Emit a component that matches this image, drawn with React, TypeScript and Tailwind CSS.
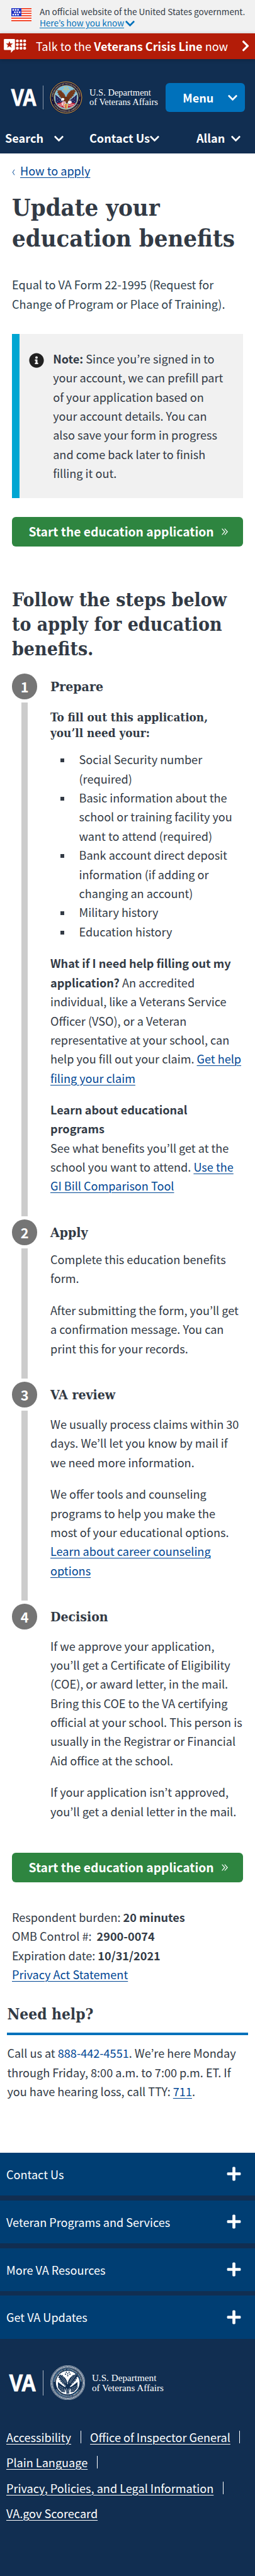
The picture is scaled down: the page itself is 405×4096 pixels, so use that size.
import type { ReactNode } from "react";
import { FaChevronDown, FaChevronRight, FaInfoCircle, FaPlus } from "react-icons/fa";

const HEADING = "font-['DejaVu_Serif_Condensed','DejaVu_Serif',serif] font-bold";
const LINK = "text-[#004795] underline decoration-1 underline-offset-[3px]";

function FlagIcon() {
  return (
    <svg viewBox="0 0 32 21" className="h-[21px] w-8 shrink-0">
      <rect width="32" height="21" fill="#fff" />
      {[0, 3.75, 7.5, 11.25, 15, 19].map((y) => (
        <rect key={y} y={y} width="32" height="1.7" fill="#f22d0c" />
      ))}
      <rect width="16" height="13" fill="#2233c4" />
      {[
        [1.8, 1.5], [5.6, 1.5], [9.4, 1.5],
        [4.4, 5.3], [8.2, 5.3], [12, 5.3],
        [1.8, 9.1], [5.6, 9.1], [9.4, 9.1],
      ].map(([x, y]) => (
        <rect key={`${x}-${y}`} x={x} y={y} width="2.4" height="2.4" fill="#fff" />
      ))}
    </svg>
  );
}

function CrisisIcon() {
  return (
    <svg viewBox="0 0 56 35" className="h-[22px] w-[35.5px] shrink-0" fill="#fff">
      <path d="M2 0H26a2 2 0 0 1 2 2V26a2 2 0 0 1-2 2H24.5L18 35V28H2a2 2 0 0 1-2-2V2A2 2 0 0 1 2 0Z" />
      <path fill="#b31c08" d="M14 5l2.2 6.3 6.8.2-5.4 4.1 2 6.6L14 18.3l-5.6 3.9 2-6.6L5 11.5l6.8-.2Z" />
      {[34, 43.3, 52.5].map((x) =>
        [4.7, 14, 23.3].map((y) => <circle key={`${x}-${y}`} cx={x} cy={y} r="3.7" />)
      )}
    </svg>
  );
}

function RingText({ id, fill, radius, size }: { id: string; fill: string; radius: number; size: number }) {
  const r = radius;
  const low = radius + size * 0.75;
  return (
    <>
      <path id={`${id}-t`} d={`M${50 - r} 50A${r} ${r} 0 0 1 ${50 + r} 50`} fill="none" />
      <path id={`${id}-b`} d={`M${50 - low} 50A${low} ${low} 0 0 0 ${50 + low} 50`} fill="none" />
      <g fill={fill} fontFamily="Liberation Serif" fontWeight="700" fontSize={size} textAnchor="middle">
        <text><textPath href={`#${id}-t`} startOffset="50%">DEPARTMENT OF VETERANS AFFAIRS</textPath></text>
        <text><textPath href={`#${id}-b`} startOffset="50%">UNITED STATES OF AMERICA</textPath></text>
      </g>
    </>
  );
}

const STARS = [[46, 20], [54, 20], [43.5, 25.5], [50, 24.5], [56.5, 25.5], [50, 30]];
const LEFT_WING = "M22 26L27 30 28 26 32 30 34 27 38 33 42 36 46 42 49 50 47 60 42 56 38 57 38 53 33 52 34 49 29 47 30 44 25 41 27 38 22 35 25 33Z";
const RIGHT_WING = "M80 23L74 28 73 24 68 29 66 27 61 32 57 36 53 42 50 50 52 60 58 56 62 56 63 52 68 51 67 48 73 45 72 42 77 38 75 36 80 32 77 30Z";

function ColorSeal() {
  return (
    <svg viewBox="0 0 100 100" className="size-[52px] shrink-0">
      <circle cx="50" cy="50" r="50" fill="#17153f" />
      <circle cx="50" cy="50" r="48" fill="none" stroke="#e3b53a" strokeWidth="1.8" />
      <circle cx="50" cy="50" r="36.8" fill="#7fbfdc" stroke="#d9ae45" strokeWidth="1.4" />
      <RingText id="seal-color" fill="#d8c27a" radius={39.8} size={6.4} />
      <circle cx="8.5" cy="58" r="1.1" fill="#d8c27a" />
      <circle cx="91.5" cy="58" r="1.1" fill="#d8c27a" />
      {STARS.map(([x, y]) => <circle key={`${x}-${y}`} cx={x} cy={y} r="1.8" fill="#f2cf4a" />)}
      <path d="M17 41L42 60 40 76 24 72 18 62Z" fill="#23255e" />
      <path d="M83 41L58 60 60 76 76 72 82 62Z" fill="#23255e" />
      <path d="M17 39L40 60M83 39L60 60" stroke="#e9e4d8" strokeWidth="1.3" />
      <path d="M21 68L42 64 45 82 30 78Z" fill="#c5283a" />
      <path d="M79 68L58 64 55 82 70 78Z" fill="#c5283a" />
      <path d="M25 73L43 68M29 77L44 73M75 73L57 68M71 77L56 73" stroke="#fff" strokeWidth="1.5" />
      <g fill="#fff">
        {[[24, 54], [29, 58], [24, 62], [34, 62], [76, 54], [71, 58], [76, 62], [66, 60], [76, 48]].map(([x, y]) => (
          <circle key={`${x}-${y}`} cx={x} cy={y} r=".9" />
        ))}
      </g>
      <path d={LEFT_WING} fill="#7a3d1e" />
      <path d={RIGHT_WING} fill="#7a3d1e" />
      <path d="M32 32L45 52M26 35L42 53M68 31L56 50M75 34L58 52" stroke="#4f2512" strokeWidth="1" />
      <path d="M44 48L57 48 60 58 54 68 46 66 40 58Z" fill="#6b3218" />
      <path d="M36 53c3-3 8-2 9 2l-3 5-5-1-3 2Z" fill="#fff" />
      <path d="M57 60l8 0 3 6-8 4-5-4Z" fill="#eef2f5" />
      <path d="M38 62L48 62 50 80 44 80 36 70Z" fill="#fff" />
      <path d="M40 62l2 15M44 62l3 17" stroke="#c5283a" strokeWidth="1.8" />
      <path d="M44 69L56 69 54 84 46 84Z" fill="#e5c25a" />
      <path d="M50 68V84M46 72l2 11" stroke="#c5283a" strokeWidth="1.4" />
    </svg>
  );
}

function WhiteSeal() {
  return (
    <svg viewBox="0 0 100 100" className="size-[55.2px] shrink-0">
      <circle cx="50" cy="50" r="49.4" fill="none" stroke="#fff" strokeWidth="1" />
      <circle cx="50" cy="50" r="46" fill="none" stroke="#fff" strokeWidth="3.4" strokeDasharray="1.9 1.3" />
      <circle cx="50" cy="50" r="43" fill="none" stroke="#fff" strokeWidth=".8" />
      <circle cx="50" cy="50" r="34" fill="#fff" />
      <RingText id="seal-white" fill="#dfe5ec" radius={36.4} size={5.8} />
      <g fill="#112e51">
        {STARS.map(([x, y]) => <circle key={`${x}-${y}`} cx={x} cy={y} r="1.9" />)}
        <path d={LEFT_WING} />
        <path d={RIGHT_WING} />
        <path d="M40 54L60 54 61 64 55 72 54 82 46 82 44 72 38 62Z" />
        <path d="M22 48L40 62 42 78 32 76 22 65Z" />
        <path d="M78 48L60 62 58 78 68 76 78 65Z" />
      </g>
      <g stroke="#fff" strokeWidth="1.1" fill="none">
        <path d="M28 31L44 52M25 36L40 53M34 31L46 50M72 29L56 52M77 34L60 54M66 30L54 50" strokeWidth=".8" />
        <path d="M24 59L38 66M24 64L39 71M30 71L41 75M76 59L62 66M76 64L61 71M70 71L59 75" strokeDasharray="2 1" />
        <path d="M36 57q5-4 9 2M46 66q2 8 0 15M51 68v14M55 66q-1 8 0 10" />
      </g>
      <path d="M18 41L43 62M82 41L57 62" stroke="#fff" strokeWidth="3" />
    </svg>
  );
}

function VaMark({ className, width }: { className: string; width: number }) {
  return (
    <svg viewBox={`0 0 ${width} 28`} className={className} overflow="visible">
      <text x="0.4" y="27" fill="#fff" stroke="#fff" strokeWidth="0.9" fontFamily="Liberation Sans" fontWeight="700" fontSize="37.6" textLength={width - 1} lengthAdjust="spacingAndGlyphs">VA</text>
    </svg>
  );
}

function StartButton({ className }: { className: string }) {
  return (
    <button className={`flex h-[46.6px] w-[367px] items-center rounded-[6px] bg-[#2e8540] pl-[26.5px] text-[19.25px] leading-none font-bold whitespace-nowrap text-white ${className}`}>
      Start the education application
      <svg viewBox="0 0 10 11" className="ml-[12px] h-[11px] w-[10px]" fill="none" stroke="#fff" strokeWidth="1.2">
        <path d="M.6 .6L5 5.5.6 10.4M4.8.6L9.2 5.5 4.8 10.4" />
      </svg>
    </button>
  );
}

function Step({ n, title, height, last, children }: { n: number; title: string; height: string; last?: boolean; children: ReactNode }) {
  return (
    <li className={`flex ${height}`}>
      <div className="flex w-[61px] shrink-0 flex-col items-start">
        <div className="flex size-[40.4px] shrink-0 items-center justify-center rounded-full bg-[#757575] text-[21.7px] leading-none font-bold text-white">{n}</div>
        {!last && <div className="my-[5px] ml-[15.2px] w-[10px] grow bg-[#ccc]" />}
      </div>
      <div className="whitespace-nowrap">
        <h3 className={`mt-[7.4px] text-[21.1px] leading-[26px] ${HEADING}`}>{title}</h3>
        {children}
      </div>
    </li>
  );
}

function Bullet({ children }: { children: ReactNode }) {
  return (
    <li className="flex">
      <span className="mt-[14px] mr-[24px] size-[6px] shrink-0 bg-[#323a45]" />
      <span>{children}</span>
    </li>
  );
}

function Divider({ className }: { className: string }) {
  return <i className={`h-[20px] w-px bg-white ${className}`} />;
}

export default function App() {
  return (
    <div className="h-[4096px] w-[405px] overflow-hidden bg-white font-['Noto_Sans_CJK_KR',sans-serif] text-[18.1px] leading-[30.36px] text-[#323a45]">
      <div className="flex h-[53.2px] bg-[#f1f1f1] pt-[12.6px] pl-[18.4px] text-[13.6px] leading-[15px] whitespace-nowrap">
        <FlagIcon />
        <div className="-mt-[1.2px] ml-[12.5px]">
          <div>An official website of the United States government.</div>
          <div className="flex items-center text-[#0071bb]">
            <span className="underline decoration-[1.3px] underline-offset-[2px]">Here’s how you know</span>
            <FaChevronDown className="mt-[3px] ml-[1px] size-[17px]" />
          </div>
        </div>
      </div>

      <div className="relative flex h-[40.4px] items-center bg-[#b31c08] pl-[6.2px] whitespace-nowrap text-white shadow-[0_1px_6px_rgba(0,0,0,0.25)]">
        <CrisisIcon />
        <div className="ml-[15.3px] grow">Talk to the <b>Veterans Crisis Line</b> now</div>
        <FaChevronRight className="mr-[5.5px] size-[20px]" />
      </div>

      <header className="h-[150.7px] bg-[#112e51] pt-[35.4px] text-white">
        <div className="flex h-[52px] items-center">
          <VaMark width={42} className="ml-[16.5px] h-[28px] w-[42px]" />
          <div className="ml-[9.5px] h-[38px] w-px bg-[#8a99ab]" />
          <div className="ml-[10px]"><ColorSeal /></div>
          <div className="ml-[11px] w-[120.8px] font-['Liberation_Serif',serif] text-[14.5px] leading-[15px] whitespace-nowrap">
            U.S. Department<br />of Veterans Affairs
          </div>
          <button className="flex h-[46.8px] w-[126.6px] items-center justify-between rounded-[6px] bg-[#0071bb] pr-[11px] pl-[27.5px] leading-none font-bold">
            Menu <FaChevronDown className="mt-[2px] size-[17px]" />
          </button>
        </div>
        <nav className="mt-[22.7px] flex pl-[8px] leading-[30px] font-bold whitespace-nowrap">
          <div className="flex w-[134px] items-center">Search <FaChevronDown className="mt-[3px] ml-[16px] size-[17px]" /></div>
          <div className="flex w-[170px] items-center">Contact Us<FaChevronDown className="mt-[3px] -ml-[1px] size-[17px]" /></div>
          <div className="flex items-center">Allan <FaChevronDown className="mt-[3px] ml-[8.5px] size-[17px]" /></div>
        </nav>
      </header>

      <main>
        <div className="mt-[12.2px] flex pl-[19px]">
          <svg viewBox="0 0 5 12" className="mt-[13px] mr-[8px] h-[10px] w-[5px]" fill="none" stroke="#004795" strokeWidth="1.2">
            <path d="M4.2 .8L1 6 4.2 11.2" />
          </svg>
          <a className={LINK}>How to apply</a>
        </div>
        <h1 className={`mt-[18px] pl-[19px] text-[38px] leading-[49.3px] whitespace-nowrap ${HEADING}`}>
          Update your<br />education benefits
        </h1>
        <p className="mt-[33.8px] pl-[19px] whitespace-nowrap text-[#2e3f4d]">
          Equal to VA Form 22-1995 (Request for<br />Change of Program or Place of Training).
        </p>

        <div className="mt-[33.2px] ml-[19px] flex h-[260.6px] w-[367px] border-l-[12.6px] border-[#00a6d2] bg-[#f1f1f1] pt-[23.7px]">
          <FaInfoCircle className="mt-[6.3px] ml-[14.7px] size-[24px] shrink-0 text-[#212121]" />
          <p className="ml-[14.5px] whitespace-nowrap">
            <b>Note:</b> Since you’re signed in to<br />your account, we can prefill part<br />of your application based on<br />your account details. You can<br />also save your form in progress<br />and come back later to finish<br />filling it out.
          </p>
        </div>
        <StartButton className="mt-[30.4px] ml-[19px]" />

        <h2 className={`mt-[66.4px] pl-[19px] text-[30px] leading-[38.9px] whitespace-nowrap ${HEADING}`}>
          Follow the steps below<br />to apply for education<br />benefits.
        </h2>

        <ol className="mt-[19.5px] pl-[19px]">
          <Step n={1} title="Prepare" height="h-[867.9px]">
            <h4 className={`mt-[23.6px] text-[18.8px] leading-[25.1px] ${HEADING}`}>
              To fill out this application,<br />you’ll need your:
            </h4>
            <ul className="mt-[13.9px] pl-[15.5px]">
              <Bullet>Social Security number<br />(required)</Bullet>
              <Bullet>Basic information about the<br />school or training facility you<br />want to attend (required)</Bullet>
              <Bullet>Bank account direct deposit<br />information (if adding or<br />changing an account)</Bullet>
              <Bullet>Military history</Bullet>
              <Bullet>Education history</Bullet>
            </ul>
            <p className="mt-[20.5px]">
              <b>What if I need help filling out my<br />application?</b> An accredited<br />individual, like a Veterans Service<br />Officer (VSO), or a Veteran<br />representative at your school, can<br />help you fill out your claim. <a className={LINK}>Get help<br />filing your claim</a>
            </p>
            <p className="mt-[20px]">
              <b>Learn about educational<br />programs</b><br />See what benefits you’ll get at the<br />school you want to attend. <a className={LINK}>Use the<br />GI Bill Comparison Tool</a>
            </p>
          </Step>
          <Step n={2} title="Apply" height="h-[258px]">
            <p className="mt-[14.5px]">Complete this education benefits<br />form.</p>
            <p className="mt-[20.3px]">After submitting the form, you’ll get<br />a confirmation message. You can<br />print this for your records.</p>
          </Step>
          <Step n={3} title="VA review" height="h-[353px]">
            <p className="mt-[18.4px]">We usually process claims within 30<br />days. We’ll let you know by mail if<br />we need more information.</p>
            <p className="mt-[20.3px]">
              We offer tools and counseling<br />programs to help you make the<br />most of your educational options.<br /><a className={LINK}>Learn about career counseling<br />options</a>
            </p>
          </Step>
          <Step n={4} title="Decision" height="h-[345px]" last>
            <p className="mt-[18px]">
              If we approve your application,<br />you’ll get a Certificate of Eligibility<br />(COE), or award letter, in the mail.<br />Bring this COE to the VA certifying<br />official at your school. This person is<br />usually in the Registrar or Financial<br />Aid office at the school.
            </p>
            <p className="mt-[20.3px]">If your application isn’t approved,<br />you’ll get a denial letter in the mail.</p>
          </Step>
        </ol>
        <StartButton className="mt-[51px] ml-[19px]" />

        <div className="mt-[40.2px] pl-[19px] whitespace-nowrap">
          Respondent burden: <b>20 minutes</b><br />
          OMB Control #: &nbsp;<b>2900-0074</b><br />
          Expiration date: <b>10/31/2021</b><br />
          <a className={LINK}>Privacy Act Statement</a>
        </div>

        <section className="mx-[11.4px] mt-[32.8px] whitespace-nowrap">
          <h2 className={`border-b-4 border-[#0071bb] pb-[12.6px] text-[24.3px] leading-8 ${HEADING}`}>Need help?</h2>
          <p className="mt-[13.5px]">
            Call us at <a className="text-[#004795]">888-442-4551</a>. We’re here Monday<br />through Friday, 8:00 a.m. to 7:00 p.m. ET. If<br />you have hearing loss, call TTY: <a className={LINK}>711</a>.
          </p>
        </section>
      </main>

      <footer className="mt-[82.4px] h-[673px] bg-[#112e51] whitespace-nowrap text-white">
        <div className="flex flex-col gap-[7.6px]">
          {["Contact Us", "Veteran Programs and Services", "More VA Resources", "Get VA Updates"].map((label) => (
            <div key={label} className="flex h-[68.3px] items-center justify-between bg-[#003e73] pr-[21.5px] pl-[10px]">
              {label}
              <FaPlus className="size-[25px]" />
            </div>
          ))}
        </div>
        <div className="mt-[42.2px] flex items-center">
          <VaMark width={44} className="ml-[13.7px] h-[28px] w-[44px]" />
          <div className="ml-[10px] h-10 w-px bg-[#a9b5c2]" />
          <div className="ml-[11px]"><WhiteSeal /></div>
          <div className="ml-[11px] font-['Liberation_Serif',serif] text-[15.2px] leading-[16px]">
            U.S. Department<br />of Veterans Affairs
          </div>
        </div>
        <div className="mt-[38.6px] pl-[10px] leading-[40.4px] [&_a]:underline [&_a]:decoration-[1.3px] [&_a]:underline-offset-[3px]">
          <div className="flex items-center"><a>Accessibility</a><Divider className="mx-[14.5px]" /><a>Office of Inspector General</a><Divider className="ml-[14.5px]" /></div>
          <div className="flex items-center"><a>Plain Language</a><Divider className="ml-[14.5px]" /></div>
          <div className="flex items-center"><a>Privacy, Policies, and Legal Information</a><Divider className="ml-[14.5px]" /></div>
          <div><a>VA.gov Scorecard</a></div>
        </div>
      </footer>
    </div>
  );
}
